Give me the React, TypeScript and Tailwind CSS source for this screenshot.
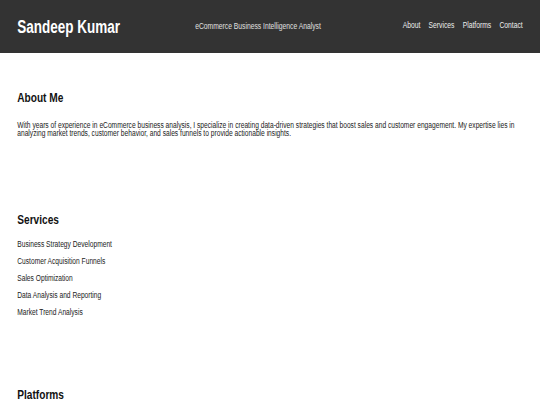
import React from "react";

const NAV = ["About", "Services", "Platforms", "Contact"];

const SERVICES = [
  "Business Strategy Development",
  "Customer Acquisition Funnels",
  "Sales Optimization",
  "Data Analysis and Reporting",
  "Market Trend Analysis",
];

export default function App() {
  return (
    <div className="min-h-screen w-full overflow-hidden bg-white">
      {/* no condensed face is installed, so the page is laid out at 720px and squeezed to 540 */}
      <div className="w-[720px] origin-top-left scale-x-75 text-[#222] font-['Liberation_Sans',Arial,sans-serif]">
        <header className="h-[53px] bg-[#333] text-white px-[23px] flex items-center justify-between">
          <h1 className="text-[18px] font-bold leading-none">Sandeep Kumar</h1>
          <p className="text-[9px] leading-none text-[#e0e0e0] -ml-[9px]">eCommerce Business Intelligence Analyst</p>
          <nav className="flex gap-[11px] text-[9px] leading-none -mt-[3px]">
            {NAV.map((item) => (
              <a key={item} href={`#${item.toLowerCase()}`} className="text-[#eee]">
                {item}
              </a>
            ))}
          </nav>
        </header>

        <main className="px-[23px]">
          <section id="about" className="pt-[37.5px] pb-[38px]">
            <h2 className="text-[13.5px] font-bold leading-none mb-[16.5px] text-[#111]">About Me</h2>
            <p className="text-[8.9px] leading-[8.5px] text-[#222]">
              With years of experience in eCommerce business analysis, I specialize in creating data-driven strategies that
              boost sales and customer engagement. My expertise lies in analyzing market trends, customer behavior, and
              sales funnels to provide actionable insights.
            </p>
          </section>

          <section id="services" className="pt-[37px] pb-[33px]">
            <h2 className="text-[13.5px] font-bold leading-none mb-[13px] text-[#111]">Services</h2>
            <ul className="flex flex-col gap-[7px] text-[8.9px] leading-[10px] text-[#222]">
              {SERVICES.map((s) => (
                <li key={s}>{s}</li>
              ))}
            </ul>
          </section>

          <section id="platforms" className="pt-[38px] pb-[38px]">
            <h2 className="text-[13.5px] font-bold leading-none text-[#111]">Platforms</h2>
          </section>
        </main>
      </div>
    </div>
  );
}
